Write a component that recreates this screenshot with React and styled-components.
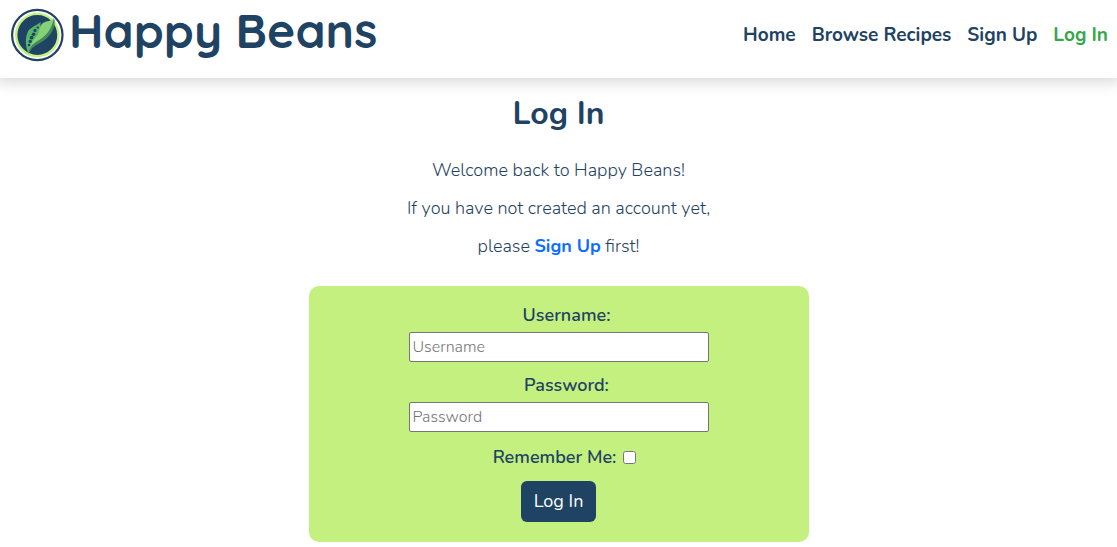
import React from "react";
import styled, { createGlobalStyle } from "styled-components";

const navy = "#1f4363";
const lime = "#c3f07f";

const GlobalStyle = createGlobalStyle`
  *, *::before, *::after { box-sizing: border-box; }
  body {
    margin: 0;
    background: #fff;
    color: ${navy};
    font-family: Nunito, Lato, "Liberation Sans", sans-serif;
    font-size: 18px;
    font-weight: 300;
    line-height: 26px;
  }
`;

const Header = styled.header`
  display: flex;
  justify-content: space-between;
  align-items: flex-start;
  padding: 8px 9px 8px 10px;
  min-height: 78px;
  background: #fff;
  box-shadow: 0 0 14px 4px rgba(0, 0, 0, 0.16);
`;

const Brand = styled.a`
  display: flex;
  align-items: flex-start;
  gap: 5px;
  color: ${navy};
  text-decoration: none;
`;

const Emblem = styled.svg`
  width: 54px;
  height: 54px;
  flex: none;
`;

const BrandName = styled.span`
  font-family: Quicksand, Nunito, sans-serif;
  font-size: 48px;
  line-height: 44px;
  font-weight: 700;
  white-space: nowrap;
`;

const Nav = styled.nav`
  display: flex;
  gap: 16px;
  padding-top: 14px;
`;

const NavLink = styled.a`
  color: ${(p) => (p.$active ? "#34a749" : navy)};
  font-size: 19px;
  font-weight: 700;
  text-decoration: none;
  white-space: nowrap;
`;

const Main = styled.main`
  display: flex;
  flex-direction: column;
  align-items: center;
  padding: 16px 16px 5px;
  text-align: center;
`;

const Title = styled.h1`
  margin: 0 0 23px;
  font-size: 32px;
  line-height: 40px;
  font-weight: 700;
`;

const Intro = styled.p`
  margin: 0 0 12px;
`;

const InlineLink = styled.a`
  color: #0d6efd;
  font-weight: 700;
  text-decoration: none;
`;

const Form = styled.form`
  display: flex;
  flex-direction: column;
  align-items: center;
  width: 100%;
  max-width: 500px;
  margin-top: 15px;
  padding: 16px 16px 20px;
  border-radius: 10px;
  background: ${lime};
`;

const Field = styled.div`
  display: flex;
  flex-direction: column;
  align-items: center;
  gap: 4px;
  width: 100%;
  max-width: 300px;
  margin-bottom: 10px;
`;

const Label = styled.label`
  padding-left: 16px;
  font-weight: 600;
`;

const Input = styled.input`
  width: 100%;
  height: 30px;
  padding: 1px 3px;
  border: 1px solid #767676;
  border-radius: 2px;
  background: #fff;
  color: ${navy};
  font: inherit;
  font-size: 16px;
  &::placeholder { color: #757575; }
`;

const Remember = styled.div`
  display: flex;
  align-items: center;
  gap: 7px;
  padding: 2px 4px 2px 0;
  margin-bottom: 9px;
`;

const Checkbox = styled.input`
  width: 13px;
  height: 13px;
  margin: 0;
`;

const Submit = styled.button`
  padding: 7px 13px;
  border: 0;
  border-radius: 6px;
  background: ${navy};
  color: #fff;
  font: inherit;
  font-weight: 400;
  line-height: 27px;
`;

function PeaPod() {
  return (
    <Emblem viewBox="0 0 54 54" aria-hidden="true">
      <circle cx="27.3" cy="27" r="25.2" fill="#fff" stroke={navy} strokeWidth="2.2" />
      <circle cx="27.3" cy="27" r="21.1" fill={navy} stroke={lime} strokeWidth="2.4" />
      <path d="M18.7 46C15 38 15 29 18.2 23C21 19 27 17.5 30.5 14C31 19 29.5 24 26 29C22 34 19.5 39 18.7 46Z" fill="#55b56b" />
      <path d="M18.7 46C19.5 36 24 31 27.5 26.5C29.5 23.5 29 18 33 15C36.5 12.6 41 13.5 44 10C44.5 16 42.5 22 37 27.5C33 31.5 27 33.5 23.5 36.5C20.5 39.5 19.5 42 18.7 46Z" fill="#85d178" />
      <path d="M44.2 10.5C46 17.5 42.5 24.5 38 29C33.5 33.5 28.5 35.5 25 38C21.5 40.5 19.8 42.5 18.7 46C19 40 21.5 37 26 34C31 31 35.5 28 38.5 23.5C41.5 19 42.5 15 44.2 10.5Z" fill="#43875a" />
      <g fill={navy}>
        <circle cx="27.8" cy="19.6" r="1.2" />
        <circle cx="25" cy="22.4" r="1.6" />
        <circle cx="23.6" cy="26.2" r="1.8" />
        <circle cx="21.6" cy="29.6" r="1.9" />
        <circle cx="20.2" cy="33.4" r="1.7" />
        <circle cx="19" cy="37" r="1.3" />
      </g>
    </Emblem>
  );
}

export default function App() {
  return (
    <>
      <GlobalStyle />
      <Header>
        <Brand href="#home">
          <PeaPod />
          <BrandName>Happy Beans</BrandName>
        </Brand>
        <Nav aria-label="Main">
          <NavLink href="#home">Home</NavLink>
          <NavLink href="#recipes">Browse Recipes</NavLink>
          <NavLink href="#signup">Sign Up</NavLink>
          <NavLink href="#login" $active aria-current="page">Log In</NavLink>
        </Nav>
      </Header>
      <Main>
        <Title>Log In</Title>
        <Intro>Welcome back to Happy Beans!</Intro>
        <Intro>If you have not created an account yet,</Intro>
        <Intro>
          please <InlineLink href="#signup">Sign Up</InlineLink> first!
        </Intro>
        <Form onSubmit={(e) => e.preventDefault()}>
          <Field>
            <Label htmlFor="username">Username:</Label>
            <Input id="username" type="text" placeholder="Username" />
          </Field>
          <Field>
            <Label htmlFor="password">Password:</Label>
            <Input id="password" type="password" placeholder="Password" />
          </Field>
          <Remember>
            <Label htmlFor="remember">Remember Me:</Label>
            <Checkbox id="remember" type="checkbox" />
          </Remember>
          <Submit type="submit">Log In</Submit>
        </Form>
      </Main>
    </>
  );
}
